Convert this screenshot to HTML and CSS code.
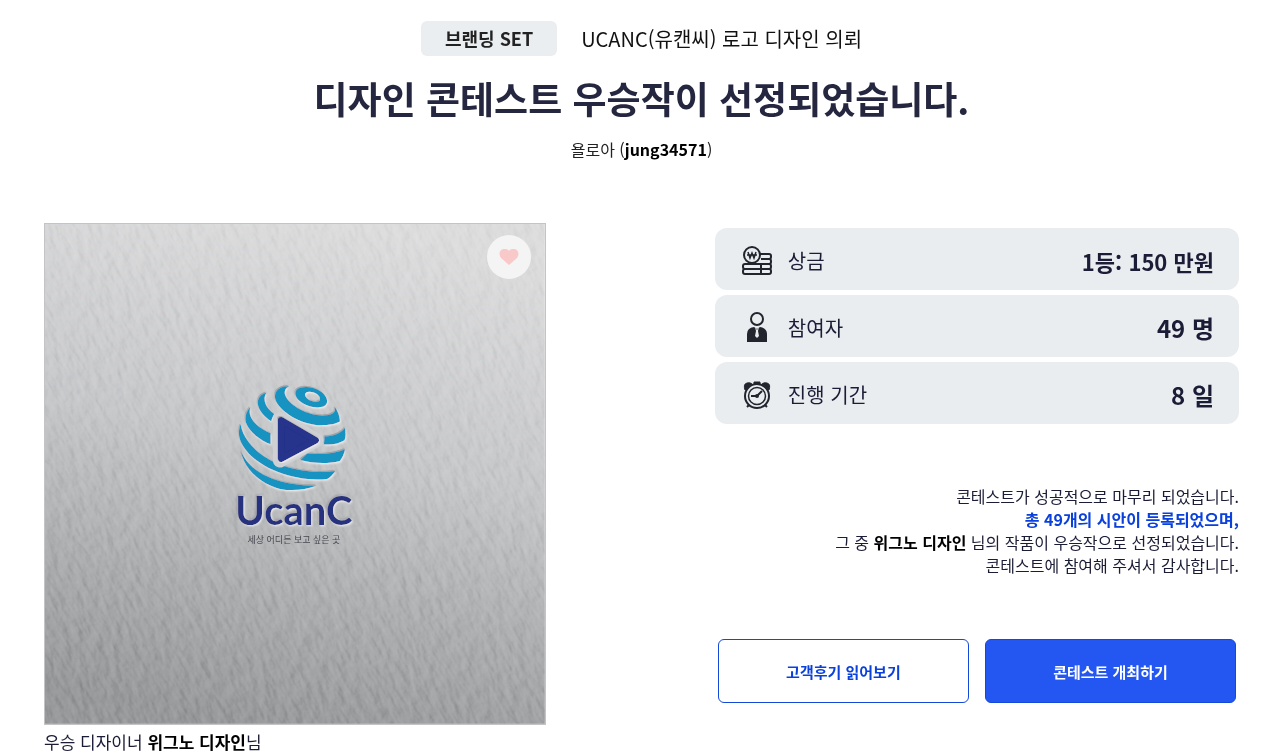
FILE: index.html
```
<!DOCTYPE html>
<html lang="ko">
<head>
<meta charset="utf-8">
<title>UCANC 로고 디자인 콘테스트</title>
<link rel="stylesheet" href="styles.css">
</head>
<body>
<header class="top">
  <div class="top-line">
    <span class="badge">브랜딩 SET</span>
    <span class="project">UCANC(유캔씨) 로고 디자인 의뢰</span>
  </div>
  <h1>디자인 콘테스트 우승작이 선정되었습니다.</h1>
  <p class="client">욜로아 (<b>jung34571</b>)</p>
</header>

<main class="content">
  <figure class="winner">
    <div class="artwork">
      <svg class="art" viewBox="0 0 500 500" role="img" aria-label="UcanC 로고">
        <defs>
          <linearGradient id="paper" x1="0.6" y1="0" x2="0.4" y2="1">
            <stop offset="0" stop-color="#dcdcdd"/>
            <stop offset="0.45" stop-color="#c6c7c9"/>
            <stop offset="0.75" stop-color="#acadaf"/>
            <stop offset="1" stop-color="#98999b"/>
          </linearGradient>
          <filter id="grain" x="0" y="0" width="100%" height="100%" color-interpolation-filters="sRGB">
            <feTurbulence type="fractalNoise" baseFrequency="0.14 0.06" numOctaves="5" seed="7" result="n"/>
            <feDiffuseLighting in="n" surfaceScale="1" diffuseConstant="0.75" lighting-color="#ffffff">
              <feDistantLight azimuth="235" elevation="42"/>
            </feDiffuseLighting>
          </filter>
          <filter id="press" x="-10%" y="-10%" width="120%" height="120%">
            <feDropShadow dx="1" dy="1" stdDeviation="1" flood-color="#ffffff" flood-opacity="0.8"/>
            <feDropShadow dx="-1" dy="-1" stdDeviation="1" flood-color="#55585e" flood-opacity="0.35"/>
          </filter>
          <filter id="press-mark" x="-10%" y="-10%" width="120%" height="120%">
            <feDropShadow dx="2" dy="3" stdDeviation="3" flood-color="#ffffff" flood-opacity="0.9"/>
            <feDropShadow dx="-2" dy="-3" stdDeviation="2" flood-color="#55585e" flood-opacity="0.5"/>
          </filter>
          <clipPath id="frame"><rect width="500" height="500"/></clipPath>
        </defs>
        <rect width="500" height="500" fill="url(#paper)"/>
        <g clip-path="url(#frame)" class="grain">
          <rect x="-150" y="-150" width="800" height="800" filter="url(#grain)" transform="rotate(-32 250 250)"/>
        </g>
        <g transform="translate(175 146) scale(0.3333)">
          <g fill="#1593c0" filter="url(#press-mark)">
            <path fill-rule="evenodd" d="M232 58C248 47 283 50 305 66C325 82 327 102 312 109C294 117 258 110 240 94C226 82 222 68 232 58ZM259 68C251 74 258 86 271 92C285 98 297 97 300 91C303 83 295 73 282 68C273 65 264 64 259 68Z"/>
            <path d="M208 49C174 47 158 70 168 93C187 132 250 165 304 166C329 166 348 162 360 155C360 138 353 122 344 112C351 130 330 139 299 136C253 132 207 104 196 76C192 65 196 54 208 49Z"/>
            <path d="M139 68C116 76 108 94 117 114C125 132 142 146 154 154C156 145 159 139 163 132C139 116 126 91 139 68Z"/>
            <path d="M314 200C342 198 365 189 375 174C378 189 378 200 374 211C357 221 336 226 312 223Z"/>
            <path d="M91 112C78 126 74 142 78 158C88 187 122 212 152 223V190C116 176 80 145 91 112Z"/>
            <path d="M262 251C309 255 351 250 375 238C373 253 367 264 360 273C322 283 275 280 242 270Z"/>
            <path d="M62 164C73 230 150 283 230 298C270 307 310 309 346 303C339 314 331 322 322 327C240 338 110 302 66 222C57 206 53 187 62 164Z"/>
            <path d="M63 244C85 300 160 347 290 347C255 361 215 364 180 357C130 345 75 305 63 244Z"/>
          </g>
          <path d="M180 147L290 211L180 272Z" fill="#cfd0d3" stroke="#cfd0d3" stroke-width="42" stroke-linejoin="round"/>
          <path d="M184 151L287 211L184 266Z" fill="#25348b" stroke="#25348b" stroke-width="20" stroke-linejoin="round" filter="url(#press-mark)"/>
        </g>
        <g filter="url(#press)">
          <text class="logo-name" x="249" y="301" text-anchor="middle">UcanC</text>
        </g>
        <text class="logo-slogan" x="249" y="319" text-anchor="middle">세상 어디든 보고 싶은 곳</text>
      </svg>
      <button type="button" class="like" aria-label="좋아요">
        <svg viewBox="0 0 20 18" width="20" height="18"><path d="M10 17L2 10C-1 6 1 1 5 1C7 1 9 1 10 3C11 1 13 1 15 1C19 1 21 6 18 10Z" fill="#f9c9ca"/></svg>
      </button>
    </div>
    <figcaption>우승 디자이너 <b>위그노 디자인</b>님</figcaption>
  </figure>

  <section class="info">
    <dl class="stats">
      <div class="stat">
        <dt>
          <svg viewBox="0 0 32 30" width="32" height="30" fill="none" stroke="#22252e" stroke-width="2">
            <path d="M19 8H28Q30 8 30 10V11Q30 13 28 13H20M28 13Q30 13 30 15V16Q30 18 28 18H18M4 18H28Q30 18 30 20V21Q30 23 28 23H4Q2 23 2 21V20Q2 18 4 18M4 23H28Q30 23 30 25V26Q30 28 28 28H4Q2 28 2 26V25Q2 23 4 23M20 18V28"/>
            <circle cx="11" cy="9" r="8" fill="#eaedf0"/>
            <path d="M7 6L9 12L11 7L13 12L15 6M6 9H16" stroke-width="1.5"/>
          </svg>
          상금
        </dt>
        <dd class="prize">1등: 150 만원</dd>
      </div>
      <div class="stat">
        <dt>
          <svg viewBox="0 0 32 34" width="32" height="34">
            <circle cx="16" cy="8" r="6" fill="none" stroke="#22252e" stroke-width="2"/>
            <path d="M6 31V23Q6 17 13 16L16 18L19 16Q26 17 26 23V31Z" fill="#22252e"/>
            <path d="M14 16L16 19L18 16L17 20L18 25L16 27L14 25L15 20Z" fill="#eaedf0"/>
          </svg>
          참여자
        </dt>
        <dd>49 명</dd>
      </div>
      <div class="stat">
        <dt>
          <svg viewBox="0 0 32 30" width="32" height="30" fill="none" stroke="#22252e" stroke-width="2">
            <path d="M4 10Q2 4 6 3Q9 2 11 4ZM28 10Q30 4 26 3Q23 2 21 4ZM13 2H19V4H13Z" fill="#22252e" stroke-width="1"/>
            <circle cx="16" cy="16" r="12" fill="#eaedf0"/>
            <circle cx="16" cy="16" r="8.500" stroke-width="1.500"/>
            <path d="M10 16H16L21 11M8 25L6 27M24 25L26 27"/>
            <circle cx="16" cy="16" r="1" fill="#22252e"/>
          </svg>
          진행 기간
        </dt>
        <dd>8 일</dd>
      </div>
    </dl>

    <p class="message">
      콘테스트가 성공적으로 마무리 되었습니다.<br>
      <strong class="count">총 49개의 시안이 등록되었으며,</strong><br>
      그 중 <b>위그노 디자인</b> 님의 작품이 우승작으로 선정되었습니다.<br>
      콘테스트에 참여해 주셔서 감사합니다.
    </p>

    <div class="actions">
      <button type="button" class="btn btn-line">고객후기 읽어보기</button>
      <button type="button" class="btn btn-fill">콘테스트 개최하기</button>
    </div>
  </section>
</main>
</body>
</html>
```

FILE: styles.css
```
* {
  box-sizing: border-box;
}
body {
  margin: 0;
  background: #fff;
  color: #1b1c36;
  font-family: "Noto Sans CJK KR", "Noto Sans", sans-serif;
  font-size: 16px;
  line-height: 22px;
}
h1, p, dl, dd, figure {
  margin: 0;
}
b {
  color: #000;
  font-weight: 700;
}

.top {
  padding: 21px 0 0 3px;
  text-align: center;
}
.top-line {
  display: flex;
  justify-content: center;
  align-items: center;
  gap: 24px;
}
.badge {
  padding: 0 24px;
  border-radius: 6px;
  background: #eaeef1;
  color: #222;
  font-size: 18px;
  font-weight: 700;
  line-height: 35px;
}
.project {
  color: #111;
  font-size: 20px;
}
h1 {
  margin-top: 17px;
  color: #25263f;
  font-size: 37px;
  font-weight: 700;
  line-height: 50px;
}
.client {
  margin-top: 15px;
  color: #222;
}

.content {
  display: grid;
  grid-template-columns: 45fr 47fr;
  gap: 169px;
  padding: 63px 41px 0 44px;
}
.artwork {
  position: relative;
  border: 1px solid #c4c4c6;
}
.art {
  display: block;
  width: 100%;
}
.grain {
  mix-blend-mode: soft-light;
}
.logo-name {
  font-family: Lato, sans-serif;
  font-size: 40px;
  font-weight: 700;
  fill: #25317f;
}
.logo-slogan {
  font-size: 9px;
  fill: #45474f;
}
.like {
  position: absolute;
  top: 11px;
  right: 14px;
  display: flex;
  align-items: center;
  justify-content: center;
  width: 44px;
  height: 44px;
  padding: 0;
  border: 0;
  border-radius: 50%;
  background: #f4f4f4;
}
figcaption {
  margin-top: 6px;
  font-size: 17px;
}

.info {
  padding-top: 5px;
}
.stats {
  display: grid;
  gap: 5px;
}
.stat {
  display: flex;
  align-items: center;
  justify-content: space-between;
  height: 62px;
  padding: 3px 25px 0 26px;
  border-radius: 12px;
  background: #eaedf0;
}
.stat dt {
  display: flex;
  align-items: center;
  gap: 15px;
  font-size: 20px;
}
.stat dd {
  font-size: 24px;
  font-weight: 700;
}
.stat .prize {
  font-size: 22px;
}
.message {
  margin-top: 61px;
  line-height: 23px;
  text-align: right;
}
.count {
  color: #0a40dc;
}
.actions {
  display: grid;
  grid-template-columns: 1fr 1fr;
  align-items: center;
  gap: 16px;
  margin-top: 62px;
  padding: 0 3px;
}
.btn {
  height: 64px;
  border: 1px solid #1448d8;
  border-radius: 6px;
  font-family: inherit;
  font-size: 15px;
  font-weight: 700;
}
.btn-line {
  background: #fff;
  color: #0a40dc;
}
.btn-fill {
  background: #2457f2;
  color: #fff;
}
```
